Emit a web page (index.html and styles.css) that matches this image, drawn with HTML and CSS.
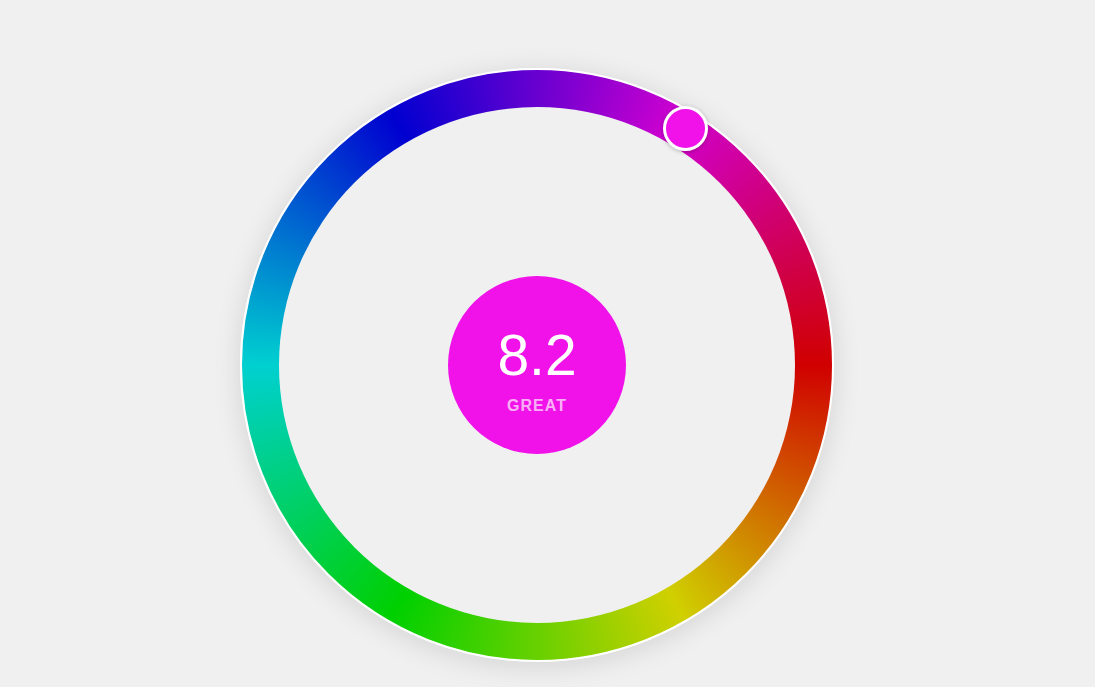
FILE: index.html
```html
<!DOCTYPE html>
<html lang="en">
<head>
  <meta charset="UTF-8">
  <meta name="viewport" content="width=device-width, initial-scale=1.0">
  <title>Rating Dial</title>
  <link rel="stylesheet" href="styles.css">
</head>
<body>
  <div class="stage">
    <div class="dial">
      <div class="dial-inner">
        <div class="score">
          <span class="score-value">8.2</span>
          <span class="score-label">GREAT</span>
        </div>
      </div>
      <!-- handle sits on the ring at the current value -->
      <div class="knob"></div>
    </div>
  </div>
</body>
</html>
```

FILE: styles.css
```css
body {
  font-family: 'Liberation Sans', Arial, sans-serif;
  margin: 0;
  padding: 0;
  min-height: 100vh;
  background: #f0f0f0;
  color: #fff;
}

.stage {
  padding: 68px 0 0 240px;
}

/* Outer ring: hue wheel, red at 3 o'clock */
.dial {
  position: relative;
  width: 594px;
  height: 594px;
  box-sizing: border-box;
  border: 2px solid #fff;
  border-radius: 50%;
  background: conic-gradient(from 90deg,
    #d00000,
    #d0d000 60deg,
    #00d000 120deg,
    #00d0d0 180deg,
    #0000d0 240deg,
    #d000d0 300deg,
    #d00000 360deg);
  box-shadow: 0 4px 28px rgba(0, 0, 0, 0.12);
  display: grid;
  place-items: center;
}

.dial-inner {
  width: 516px;
  height: 516px;
  border-radius: 50%;
  background: #f0f0f0;
  display: grid;
  place-items: center;
}

.score {
  width: 178px;
  height: 178px;
  box-sizing: border-box;
  padding-top: 10px;
  border-radius: 50%;
  background: #f012e8;
  display: flex;
  flex-direction: column;
  align-items: center;
  justify-content: center;
  gap: 14px;
}

.score-value {
  font-size: 57px;
  line-height: 1;
}

.score-label {
  font-size: 16px;
  line-height: 1;
  font-weight: bold;
  letter-spacing: 1px;
  color: rgba(255, 255, 255, 0.68);
}

.knob {
  position: absolute;
  left: 421px;
  top: 36px;
  width: 45px;
  height: 45px;
  box-sizing: border-box;
  border: 3px solid #fff;
  border-radius: 50%;
  background: #f012e8;
  box-shadow: 0 1px 4px rgba(0, 0, 0, 0.25);
}
```
